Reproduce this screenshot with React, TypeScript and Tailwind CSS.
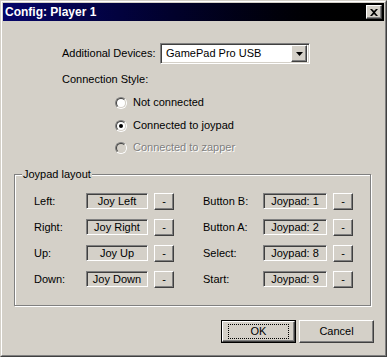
import React from "react";

const font = { fontFamily: '"Liberation Sans", Arial, sans-serif' };

function RaisedButton({ children, className = "" }: { children: React.ReactNode; className?: string }) {
  return (
    <div
      className={`flex items-center justify-center bg-[#d4d0c8] border border-t-white border-l-white border-b-[#404040] border-r-[#404040] shadow-[inset_-1px_-1px_#808080] text-black ${className}`}
    >
      {children}
    </div>
  );
}

function Field({ value, w }: { value: string; w: string }) {
  return (
    <div
      className={`flex items-center justify-center ${w} h-[16px] bg-[#d4d0c8] border border-t-[#808080] border-l-[#808080] border-b-white border-r-white shadow-[inset_1px_1px_#404040,inset_-1px_-1px_#d4d0c8] text-[11px] leading-none`}
    >
      {value}
    </div>
  );
}

function Radio({ label, checked, disabled }: { label: string; checked?: boolean; disabled?: boolean }) {
  return (
    <div className="flex items-center h-[13px]">
      <div className="w-[12px] h-[12px] rounded-full border border-t-[#808080] border-l-[#808080] border-b-white border-r-white">
        <div
          className={`w-full h-full rounded-full border border-t-[#404040] border-l-[#404040] border-b-[#d4d0c8] border-r-[#d4d0c8] flex items-center justify-center ${
            disabled ? "bg-[#d4d0c8]" : "bg-white"
          }`}
        >
          {checked && <div className="w-[4px] h-[4px] rounded-full bg-black" />}
        </div>
      </div>
      <span
        className={`ml-[6px] text-[11px] ${disabled ? "text-[#808080] [text-shadow:1px_1px_0_#fff]" : "text-black"}`}
      >
        {label}
      </span>
    </div>
  );
}

const leftRows = [
  ["Left:", "Joy Left"],
  ["Right:", "Joy Right"],
  ["Up:", "Joy Up"],
  ["Down:", "Joy Down"],
];
const rightRows = [
  ["Button B:", "Joypad: 1"],
  ["Button A:", "Joypad: 2"],
  ["Select:", "Joypad: 8"],
  ["Start:", "Joypad: 9"],
];

function MapColumn({ rows, labelW, fieldW }: { rows: string[][]; labelW: string; fieldW: string }) {
  return (
    <div className="flex flex-col gap-[10px]">
      {rows.map(([label, value]) => (
        <div key={label} className="flex items-center h-[16px]">
          <span className={`${labelW} text-[11px]`}>{label}</span>
          <Field value={value} w={fieldW} />
          <RaisedButton className="ml-[6px] w-[20px] h-[17px] text-[11px]">-</RaisedButton>
        </div>
      ))}
    </div>
  );
}

export default function App() {
  return (
    <div className="w-[387px] h-[357px] text-black" style={font}>
      <div className="w-full h-full border border-t-[#d4d0c8] border-l-[#d4d0c8] border-b-[#404040] border-r-[#404040]">
        <div className="w-full h-full border border-t-white border-l-white border-b-[#808080] border-r-[#808080] bg-[#d4d0c8] p-px flex flex-col">
          <div className="h-[18px] flex items-center justify-between bg-gradient-to-r from-[#06066a] to-black pl-[2px] pr-[2px]">
            <span className="text-white font-bold text-[12px]">Config: Player 1</span>
            <RaisedButton className="w-[16px] h-[14px]">
              <svg width="8" height="7" viewBox="0 0 8 7">
                <path d="M0 0h2l2 2 2-2h2L5 3.5 8 7H6L4 5 2 7H0l3-3.5z" fill="black" />
              </svg>
            </RaisedButton>
          </div>

          <div className="flex items-center mt-[22px] pl-[59px]">
            <span className="w-[98px] text-[11px]">Additional Devices:</span>
            <div className="w-[150px] h-[21px] flex items-center bg-white border border-t-[#808080] border-l-[#808080] border-b-white border-r-white shadow-[inset_1px_1px_#404040,inset_-1px_-1px_#d4d0c8] p-[2px]">
              <span className="flex-1 pl-[3px] text-[11px]">GamePad Pro USB</span>
              <RaisedButton className="w-[16px] h-[17px]">
                <svg width="7" height="4" viewBox="0 0 7 4">
                  <path d="M0 0h7L3.5 4z" fill="black" />
                </svg>
              </RaisedButton>
            </div>
          </div>

          <div className="mt-[9px] pl-[59px] text-[11px] leading-[13px]">Connection Style:</div>

          <div className="flex flex-col pl-[112px] mt-[10px]">
            <Radio label="Not connected" />
            <div className="mt-[10px]">
              <Radio label="Connected to joypad" checked />
            </div>
            <div className="mt-[9px]">
              <Radio label="Connected to zapper" disabled />
            </div>
          </div>

          <div className="relative mx-[11px] mt-[20px] h-[132px] w-[357px] border border-[#808080] shadow-[inset_1px_1px_white,1px_1px_white]">
            <span className="absolute -top-[7px] left-[7px] px-[1px] bg-[#d4d0c8] text-[11px] leading-[13px]">
              Joypad layout
            </span>
            <div className="flex pt-[18px] pl-[19px]">
              <MapColumn rows={leftRows} labelW="w-[52px]" fieldW="w-[62px]" />
              <div className="ml-[29px]">
                <MapColumn rows={rightRows} labelW="w-[60px]" fieldW="w-[64px]" />
              </div>
            </div>
          </div>

          <div className="flex justify-end gap-[3px] mt-[14px] pr-[10px]">
            <div className="w-[75px] h-[23px] border border-black">
              <RaisedButton className="w-full h-full text-[11px]">
                <div className="w-[61px] h-[15px] flex items-center justify-center border border-dotted border-black">OK</div>
              </RaisedButton>
            </div>
            <RaisedButton className="w-[75px] h-[23px] text-[11px]">Cancel</RaisedButton>
          </div>
        </div>
      </div>
    </div>
  );
}
